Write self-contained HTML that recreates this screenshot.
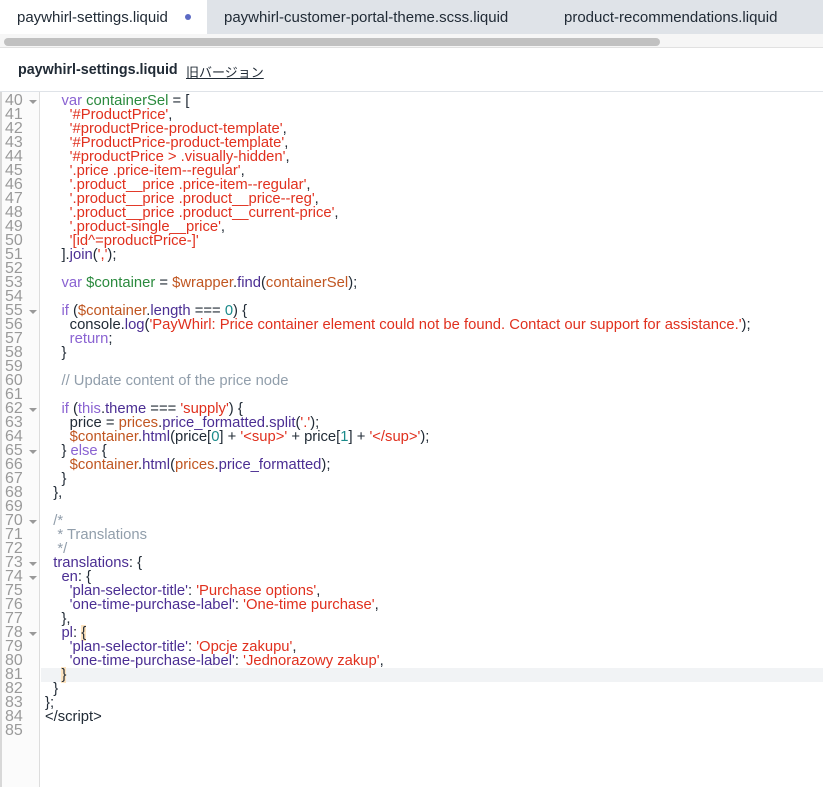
<!DOCTYPE html>
<html><head><meta charset="utf-8">
<style>
*{margin:0;padding:0;box-sizing:border-box}
body{width:823px;height:787px;overflow:hidden;background:#fff;font-family:"Liberation Sans","Noto Sans CJK JP",sans-serif;position:relative}
.tabs{position:absolute;left:0;top:0;width:823px;height:34px;background:#dfe3e8}
.tab{position:absolute;top:0;height:34px;line-height:36px;font-size:15px;color:#212b36}
.t1{left:0;width:207px;background:#fff;padding-left:17px}
.dot{position:absolute;left:185px;top:14px;width:6px;height:6px;border-radius:50%;background:#5c6ac4}
.sb{position:absolute;left:0;top:34px;width:823px;height:14px;background:#f6f6f6;border-bottom:1px solid #e1e1e1}
.thumb{position:absolute;left:4px;top:4px;width:656px;height:8px;border-radius:4px;background:#c1c1c1}
.hdr{position:absolute;left:0;top:48px;width:823px;height:44px;border-bottom:1px solid #dfe3e8;background:#fff}
.hdr b{position:absolute;left:18px;top:14px;font-size:14.3px;color:#212b36}
.hdr u{position:absolute;left:186px;top:14px;font-size:13px;color:#212b36;text-decoration:underline}
.ed{position:absolute;left:0;top:92px;width:823px;height:695px;overflow:hidden}
.gut{position:absolute;left:0;top:0;width:40px;height:695px;background:#fbfbfb;border-right:1px solid #ddd;border-left:2px solid #d8d8d8}
.lines{position:absolute;left:0;top:-12px;width:823px}
.l{position:relative;height:14px;line-height:14px;font-size:14.8px;white-space:pre;color:#212b36}
.n{position:absolute;left:5px;top:0;color:#9a9a9a;width:22px;font-size:16px;line-height:14px}
.n.f::after{content:"";position:absolute;left:24px;top:6px;border-left:4px solid transparent;border-right:4px solid transparent;border-top:4px solid #999}
.c{position:absolute;left:45px;top:0}
.act{background:#f1f3f5}
.k{color:#8a63d2}.v{color:#2b8a3e}.s{color:#e0301e}.p{color:#4b2e93}.o{color:#c05621}.m{color:#1a8a8a}.cm{color:#919eab}
.br{background:#fde3bf}
</style></head><body>
<div class="tabs">
<div class="tab t1">paywhirl-settings.liquid<span class="dot"></span></div>
<div class="tab" style="left:224px">paywhirl-customer-portal-theme.scss.liquid</div>
<div class="tab" style="left:564px">product-recommendations.liquid</div>
</div>
<div class="sb"><div class="thumb"></div></div>
<div class="hdr"><b>paywhirl-settings.liquid</b><u>旧バージョン</u></div>
<div class="ed">
<div class="gut"></div>
<div class="lines">
<div class="l"><span class="n">39</span><span class="c"></span></div>
<div class="l"><span class="n f">40</span><span class="c">    <span class="k">var</span> <span class="v">containerSel</span> = [</span></div>
<div class="l"><span class="n">41</span><span class="c">      <span class="s">'#ProductPrice'</span>,</span></div>
<div class="l"><span class="n">42</span><span class="c">      <span class="s">'#productPrice-product-template'</span>,</span></div>
<div class="l"><span class="n">43</span><span class="c">      <span class="s">'#ProductPrice-product-template'</span>,</span></div>
<div class="l"><span class="n">44</span><span class="c">      <span class="s">'#productPrice &gt; .visually-hidden'</span>,</span></div>
<div class="l"><span class="n">45</span><span class="c">      <span class="s">'.price .price-item--regular'</span>,</span></div>
<div class="l"><span class="n">46</span><span class="c">      <span class="s">'.product__price .price-item--regular'</span>,</span></div>
<div class="l"><span class="n">47</span><span class="c">      <span class="s">'.product__price .product__price--reg'</span>,</span></div>
<div class="l"><span class="n">48</span><span class="c">      <span class="s">'.product__price .product__current-price'</span>,</span></div>
<div class="l"><span class="n">49</span><span class="c">      <span class="s">'.product-single__price'</span>,</span></div>
<div class="l"><span class="n">50</span><span class="c">      <span class="s">'[id^=productPrice-]'</span></span></div>
<div class="l"><span class="n">51</span><span class="c">    ].<span class="p">join</span>(<span class="s">','</span>);</span></div>
<div class="l"><span class="n">52</span><span class="c"></span></div>
<div class="l"><span class="n">53</span><span class="c">    <span class="k">var</span> <span class="v">$container</span> = <span class="o">$wrapper</span>.<span class="p">find</span>(<span class="o">containerSel</span>);</span></div>
<div class="l"><span class="n">54</span><span class="c"></span></div>
<div class="l"><span class="n f">55</span><span class="c">    <span class="k">if</span> (<span class="o">$container</span>.<span class="p">length</span> === <span class="m">0</span>) {</span></div>
<div class="l"><span class="n">56</span><span class="c">      console.<span class="p">log</span>(<span class="s">'PayWhirl: Price container element could not be found. Contact our support for assistance.'</span>);</span></div>
<div class="l"><span class="n">57</span><span class="c">      <span class="k">return</span>;</span></div>
<div class="l"><span class="n">58</span><span class="c">    }</span></div>
<div class="l"><span class="n">59</span><span class="c"></span></div>
<div class="l"><span class="n">60</span><span class="c">    <span class="cm">// Update content of the price node</span></span></div>
<div class="l"><span class="n">61</span><span class="c"></span></div>
<div class="l"><span class="n f">62</span><span class="c">    <span class="k">if</span> (<span class="k">this</span>.<span class="p">theme</span> === <span class="s">'supply'</span>) {</span></div>
<div class="l"><span class="n">63</span><span class="c">      price = <span class="o">prices</span>.<span class="p">price_formatted</span>.<span class="p">split</span>(<span class="s">'.'</span>);</span></div>
<div class="l"><span class="n">64</span><span class="c">      <span class="o">$container</span>.<span class="p">html</span>(price[<span class="m">0</span>] + <span class="s">'&lt;sup&gt;'</span> + price[<span class="m">1</span>] + <span class="s">'&lt;/sup&gt;'</span>);</span></div>
<div class="l"><span class="n f">65</span><span class="c">    } <span class="k">else</span> {</span></div>
<div class="l"><span class="n">66</span><span class="c">      <span class="o">$container</span>.<span class="p">html</span>(<span class="o">prices</span>.<span class="p">price_formatted</span>);</span></div>
<div class="l"><span class="n">67</span><span class="c">    }</span></div>
<div class="l"><span class="n">68</span><span class="c">  },</span></div>
<div class="l"><span class="n">69</span><span class="c"></span></div>
<div class="l"><span class="n f">70</span><span class="c">  <span class="cm">/*</span></span></div>
<div class="l"><span class="n">71</span><span class="c">   <span class="cm">* Translations</span></span></div>
<div class="l"><span class="n">72</span><span class="c">   <span class="cm">*/</span></span></div>
<div class="l"><span class="n f">73</span><span class="c">  <span class="p">translations</span>: {</span></div>
<div class="l"><span class="n f">74</span><span class="c">    <span class="p">en</span>: {</span></div>
<div class="l"><span class="n">75</span><span class="c">      <span class="p">'plan-selector-title'</span>: <span class="s">'Purchase options'</span>,</span></div>
<div class="l"><span class="n">76</span><span class="c">      <span class="p">'one-time-purchase-label'</span>: <span class="s">'One-time purchase'</span>,</span></div>
<div class="l"><span class="n">77</span><span class="c">    },</span></div>
<div class="l"><span class="n f">78</span><span class="c">    <span class="p">pl</span>: <span class="br">{</span></span></div>
<div class="l"><span class="n">79</span><span class="c">      <span class="p">'plan-selector-title'</span>: <span class="s">'Opcje zakupu'</span>,</span></div>
<div class="l"><span class="n">80</span><span class="c">      <span class="p">'one-time-purchase-label'</span>: <span class="s">'Jednorazowy zakup'</span>,</span></div>
<div class="l act" style="margin-left:41px"><span class="n" style="left:-36px">81</span><span class="c" style="left:4px">    <span class="br">}</span></span></div>
<div class="l"><span class="n">82</span><span class="c">  }</span></div>
<div class="l"><span class="n">83</span><span class="c">};</span></div>
<div class="l"><span class="n">84</span><span class="c">&lt;/script&gt;</span></div>
<div class="l"><span class="n">85</span><span class="c"></span></div>
</div>
</div>
</body></html>
